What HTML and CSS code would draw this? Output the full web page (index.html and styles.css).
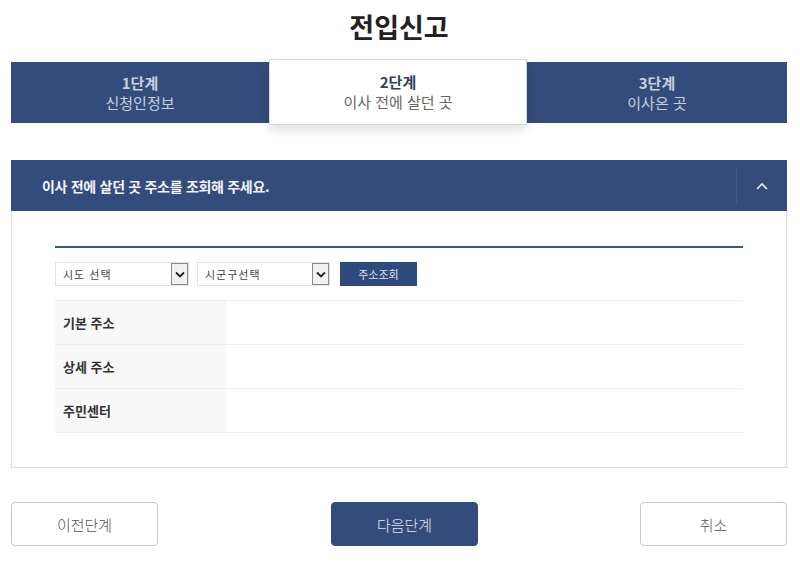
FILE: index.html
```html
<!DOCTYPE html>
<html lang="ko">
<head>
<meta charset="utf-8">
<title>전입신고</title>
<link rel="stylesheet" href="styles.css">
</head>
<body>
<div class="page">
  <h1 class="title">전입신고</h1>
  <div class="steps">
    <div class="step"><strong>1단계</strong><span>신청인정보</span></div>
    <div class="step active"><strong>2단계</strong><span>이사 전에 살던 곳</span></div>
    <div class="step"><strong>3단계</strong><span>이사온 곳</span></div>
  </div>

  <section class="panel">
    <div class="panel-head">
      <h2>이사 전에 살던 곳 주소를 조회해 주세요.</h2>
      <button class="toggle" aria-label="접기">
        <svg width="12" height="8" viewBox="0 0 12 8"><path d="M1 7 L6 2 L11 7" fill="none" stroke="#e8ecf4" stroke-width="1.6"/></svg>
      </button>
    </div>
    <div class="panel-body">
      <div class="search">
        <div class="sel sel1"><span>시도 선택</span><i class="arrow"><svg width="10" height="7" viewBox="0 0 10 7"><path d="M1 1.5 L5 5.5 L9 1.5" fill="none" stroke="#222" stroke-width="1.8"/></svg></i></div>
        <div class="sel sel2"><span>시군구선택</span><i class="arrow"><svg width="10" height="7" viewBox="0 0 10 7"><path d="M1 1.5 L5 5.5 L9 1.5" fill="none" stroke="#222" stroke-width="1.8"/></svg></i></div>
        <button class="btn-search">주소조회</button>
      </div>
      <div class="table">
        <div class="row"><div class="th">기본 주소</div><div class="td"></div></div>
        <div class="row"><div class="th">상세 주소</div><div class="td"></div></div>
        <div class="row"><div class="th">주민센터</div><div class="td"></div></div>
      </div>
    </div>
  </section>

  <div class="actions">
    <button class="btn">이전단계</button>
    <button class="btn primary">다음단계</button>
    <button class="btn">취소</button>
  </div>
</div>
</body>
</html>
```

FILE: styles.css
```css
* { box-sizing: border-box; }
html, body { margin: 0; padding: 0; background: #fff; }
body {
  font-family: "Noto Sans CJK KR", "Noto Sans", sans-serif;
  color: #333;
}
.page {
  width: 800px;
  padding: 0 13px 0 11px;
}
.title {
  margin: 0;
  height: 59px;
  padding-top: 9px;
  text-align: center;
  font-size: 27px;
  line-height: 36px;
  font-weight: 700;
  color: #222;
}
.steps {
  display: grid;
  grid-template-columns: 258px 258px 260px;
  background: #344c7b;
  height: 61px;
  margin-top: 3px;
}
.step {
  display: flex;
  flex-direction: column;
  align-items: center;
  justify-content: center;
  color: #c7cfdf;
  padding-top: 1px;
}
.step strong {
  font-size: 15px;
  line-height: 20px;
  font-weight: 700;
}
.step span {
  font-size: 15px;
  line-height: 20px;
  font-weight: 400;
}
.step.active {
  background: #fff;
  margin: -3px 0 -2px;
  border: 1px solid #d4d8e0;
  box-shadow: 0 5px 10px rgba(0,0,0,0.12);
  position: relative;
  z-index: 1;
  padding-top: 0;
}
.step.active strong { color: #34405a; }
.step.active span { color: #666; }

.panel {
  margin-top: 37px;
  border: 1px solid #dcdcdc;
  border-top: none;
}
.panel-head {
  display: flex;
  align-items: center;
  height: 51px;
  background: #344c7b;
  margin: 0 -1px;
}
.panel-head h2 {
  flex: 1;
  margin: 0;
  padding-left: 31px;
  font-size: 14px;
  font-weight: 700;
  color: #f2f4f8;
  letter-spacing: -0.3px;
}
.toggle {
  width: 51px;
  height: 36px;
  border: none;
  border-left: 1px solid #40588a;
  background: transparent;
  display: flex;
  align-items: center;
  justify-content: center;
  padding: 0;
}
.panel-body {
  padding: 35px 43px 34px 43px;
}
.search {
  border-top: 2px solid #3d5686;
  padding: 14px 0 14px;
  display: flex;
  align-items: flex-start;
  gap: 8px;
}
.sel {
  height: 24px;
  border: 1px solid #e2e2e2;
  display: flex;
  align-items: center;
  justify-content: space-between;
  font-family: "Noto Sans CJK KR", sans-serif;
  font-size: 11px;
  color: #444;
  padding-left: 7px;
  letter-spacing: 1px;
}
.sel1 { width: 134px; }
.sel2 { width: 133px; }
.arrow {
  width: 17px;
  height: 22px;
  border: 1px solid #8a8a8a;
  background: #f1f1f1;
  display: flex;
  align-items: center;
  justify-content: center;
}
.btn-search {
  margin-left: 2px;
  width: 77px;
  height: 24px;
  border: none;
  background: #2f4a7a;
  color: #dfe4ee;
  font-family: "Noto Sans CJK KR", sans-serif;
  font-size: 11px;
  padding: 0;
}
.table {
  border-top: 1px solid #ececec;
}
.row {
  display: flex;
  height: 44px;
  border-bottom: 1px solid #ececec;
}
.th {
  width: 171px;
  background: #f8f8f8;
  display: flex;
  align-items: center;
  padding-left: 8px;
  font-size: 13px;
  font-weight: 700;
  color: #333;
}
.td { flex: 1; }

.actions {
  margin-top: 34px;
  display: flex;
  justify-content: space-between;
}
.btn {
  width: 147px;
  height: 44px;
  border: 1px solid #c8c8c8;
  border-radius: 4px;
  background: #fff;
  font-family: "Noto Sans CJK KR", sans-serif;
  font-size: 15px;
  font-weight: 300;
  color: #555;
  padding: 0;
}
.btn.primary {
  background: #344c7b;
  border-color: #344c7b;
  color: #e0e5ee;
  margin-left: 11px;
}
```
